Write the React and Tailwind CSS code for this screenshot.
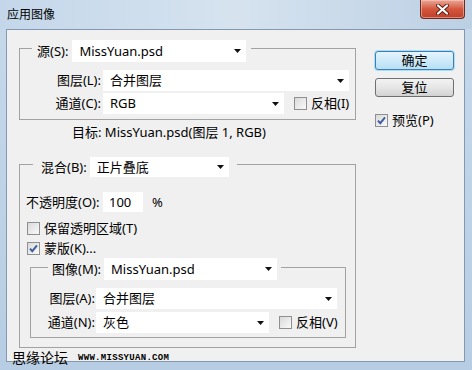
import React from "react";

// dialog font: latin from Noto Sans, chinese falls through to Noto Sans CJK SC
const uiFont = "font-['Noto_Sans','Noto_Sans_CJK_SC',sans-serif]";

function Arrow() {
  return (
    <svg width="7" height="4" viewBox="0 0 7 4" className="shrink-0">
      <path d="M0 0h7L3.5 4z" fill="#111" />
    </svg>
  );
}

function Dropdown({ value, className = "" }) {
  return (
    <div className={`flex items-center justify-between bg-white pl-[7px] pr-[5px] ${className}`}>
      <span className="leading-none">{value}</span>
      <Arrow />
    </div>
  );
}

function CheckBox({ checked }) {
  return (
    <span className="flex h-[13px] w-[13px] shrink-0 items-center justify-center border border-[#8e8f8f] bg-gradient-to-br from-[#d9d9d9] to-[#fafafa]">
      {checked && (
        <svg width="11" height="11" viewBox="0 0 11 11">
          <path d="M2 5.6L4.3 8.2L9 2.4" fill="none" stroke="#3d5d9e" strokeWidth="1.9" />
        </svg>
      )}
    </span>
  );
}

function CheckRow({ checked, label, className = "" }) {
  return (
    <div className={`flex items-center gap-[4px] ${className}`}>
      <CheckBox checked={checked} />
      <span className="leading-none">{label}</span>
    </div>
  );
}

export default function App() {
  return (
    <div className={`relative h-[370px] w-[472px] overflow-hidden bg-gradient-to-b from-[#c7d9eb] to-[#b7cde3] text-[13px] text-black ${uiFont}`}>
      {/* title bar */}
      <div className="flex h-[29px] items-start justify-between bg-gradient-to-r from-[#c4d7ea] via-[#d6e3ef] to-[#bcd0e4]">
        <span className="ml-[7px] mt-[6px] text-[12px] leading-[17px]">应用图像</span>
        <div className="mr-[7px] flex h-[19px] w-[45px] items-center justify-center rounded-b-[4px] border border-t-0 border-[#6f2a1e] bg-gradient-to-b from-[#e9a797] via-[#d3563d] to-[#c0402a] shadow-[inset_0_0_0_1px_rgba(255,210,200,0.5)]">
          <svg width="13" height="11" viewBox="0 0 13 11">
            <path d="M2 1.5L11 9.5M11 1.5L2 9.5" stroke="#5a1c12" strokeWidth="4" strokeLinecap="round" />
            <path d="M2 1.5L11 9.5M11 1.5L2 9.5" stroke="#fff" strokeWidth="2.2" strokeLinecap="round" />
          </svg>
        </div>
      </div>

      {/* client area */}
      <div className="ml-[6px] mr-[7px] flex h-[333px] flex-col border border-[#8499b0] bg-[#f0f0f0]">
        <div className="flex">
          {/* left column */}
          <div className="ml-[12px] flex w-[337px] flex-col pt-[18px]">
            {/* 源 group */}
            <div className="flex flex-col border border-[#a2a2a2] pb-[5px]">
              <div className="-mt-[9px] ml-[12px] flex h-[22px] w-fit items-center bg-[#f0f0f0] px-[5px]">
                <span className="leading-none">源(S):</span>
                <Dropdown value="MissYuan.psd" className="ml-[4px] h-[22px] w-[174px]" />
              </div>
              <div className="mt-[8px] flex items-center">
                <span className="w-[81px] text-right leading-none">图层(L):</span>
                <Dropdown value="合并图层" className="ml-[2px] h-[21px] w-[246px]" />
              </div>
              <div className="mt-[2px] flex items-center">
                <span className="w-[81px] text-right leading-none">通道(C):</span>
                <Dropdown value="RGB" className="ml-[2px] h-[21px] w-[181px]" />
                <CheckRow label="反相(I)" className="ml-[10px]" />
              </div>
            </div>

            <div className="ml-[53px] mt-[4px] h-[16px] leading-[16px]">目标: MissYuan.psd(图层 1, RGB)</div>

            {/* 混合 group */}
            <div className="mt-[24px] flex flex-col border border-[#a2a2a2] pb-[9px]">
              <div className="-mt-[8px] ml-[13px] flex h-[20px] w-fit items-center bg-[#f0f0f0] px-[8px]">
                <span className="leading-none">混合(B):</span>
                <Dropdown value="正片叠底" className="ml-[3px] h-[20px] w-[139px]" />
              </div>
              <div className="mt-[15px] flex items-center">
                <span className="ml-[6px] w-[77px] leading-none">不透明度(O):</span>
                <div className="flex h-[20px] w-[40px] items-center bg-white pl-[6px] leading-none">100</div>
                <span className="ml-[9px] leading-none">%</span>
              </div>
              <CheckRow label="保留透明区域(T)" className="ml-[7px] mt-[6px] h-[20px]" />
              <CheckRow checked label="蒙版(K)..." className="ml-[7px] h-[20px]" />

              {/* 图像 inner group */}
              <div className="ml-[10px] mr-[9px] mt-[9px] flex flex-col border border-[#a2a2a2] pb-[4px]">
                <div className="-mt-[10px] ml-[17px] flex h-[22px] w-fit items-center bg-[#f0f0f0] px-[4px]">
                  <span className="leading-none">图像(M):</span>
                  <Dropdown value="MissYuan.psd" className="ml-[3px] h-[22px] w-[173px]" />
                </div>
                <div className="mt-[8px] flex items-center">
                  <span className="w-[64px] text-right leading-none">图层(A):</span>
                  <Dropdown value="合并图层" className="ml-[1px] h-[21px] w-[241px]" />
                </div>
                <div className="mt-[3px] flex items-center">
                  <span className="w-[64px] text-right leading-none">通道(N):</span>
                  <Dropdown value="灰色" className="ml-[1px] h-[21px] w-[173px]" />
                  <CheckRow label="反相(V)" className="ml-[10px]" />
                </div>
              </div>
            </div>
          </div>

          {/* right column */}
          <div className="ml-[19px] flex w-[79px] flex-col pt-[21px]">
            <button className="flex h-[19px] items-center justify-center rounded-[3px] border border-[#3c7fb1] bg-gradient-to-b from-[#e5f4fc] to-[#b7dff6] leading-none shadow-[0_0_0_1px_#a8ddf7]">
              确定
            </button>
            <button className="mt-[8px] flex h-[19px] items-center justify-center rounded-[3px] border border-[#707070] bg-gradient-to-b from-[#f3f3f3] via-[#e6e6e6] to-[#d2d2d2] leading-none">
              复位
            </button>
            <CheckRow checked label="预览(P)" className="mt-[13px] h-[20px]" />
          </div>
        </div>

        {/* watermark */}
        <div className="ml-[5px] mt-[2px] flex items-center">
          <span className="text-[14px] leading-[16px]">思缘论坛</span>
          <span className="ml-[10px] font-['Liberation_Mono',monospace] text-[9px] font-bold uppercase leading-none tracking-[0.3px]">www.missyuan.com</span>
        </div>
      </div>
    </div>
  );
}
